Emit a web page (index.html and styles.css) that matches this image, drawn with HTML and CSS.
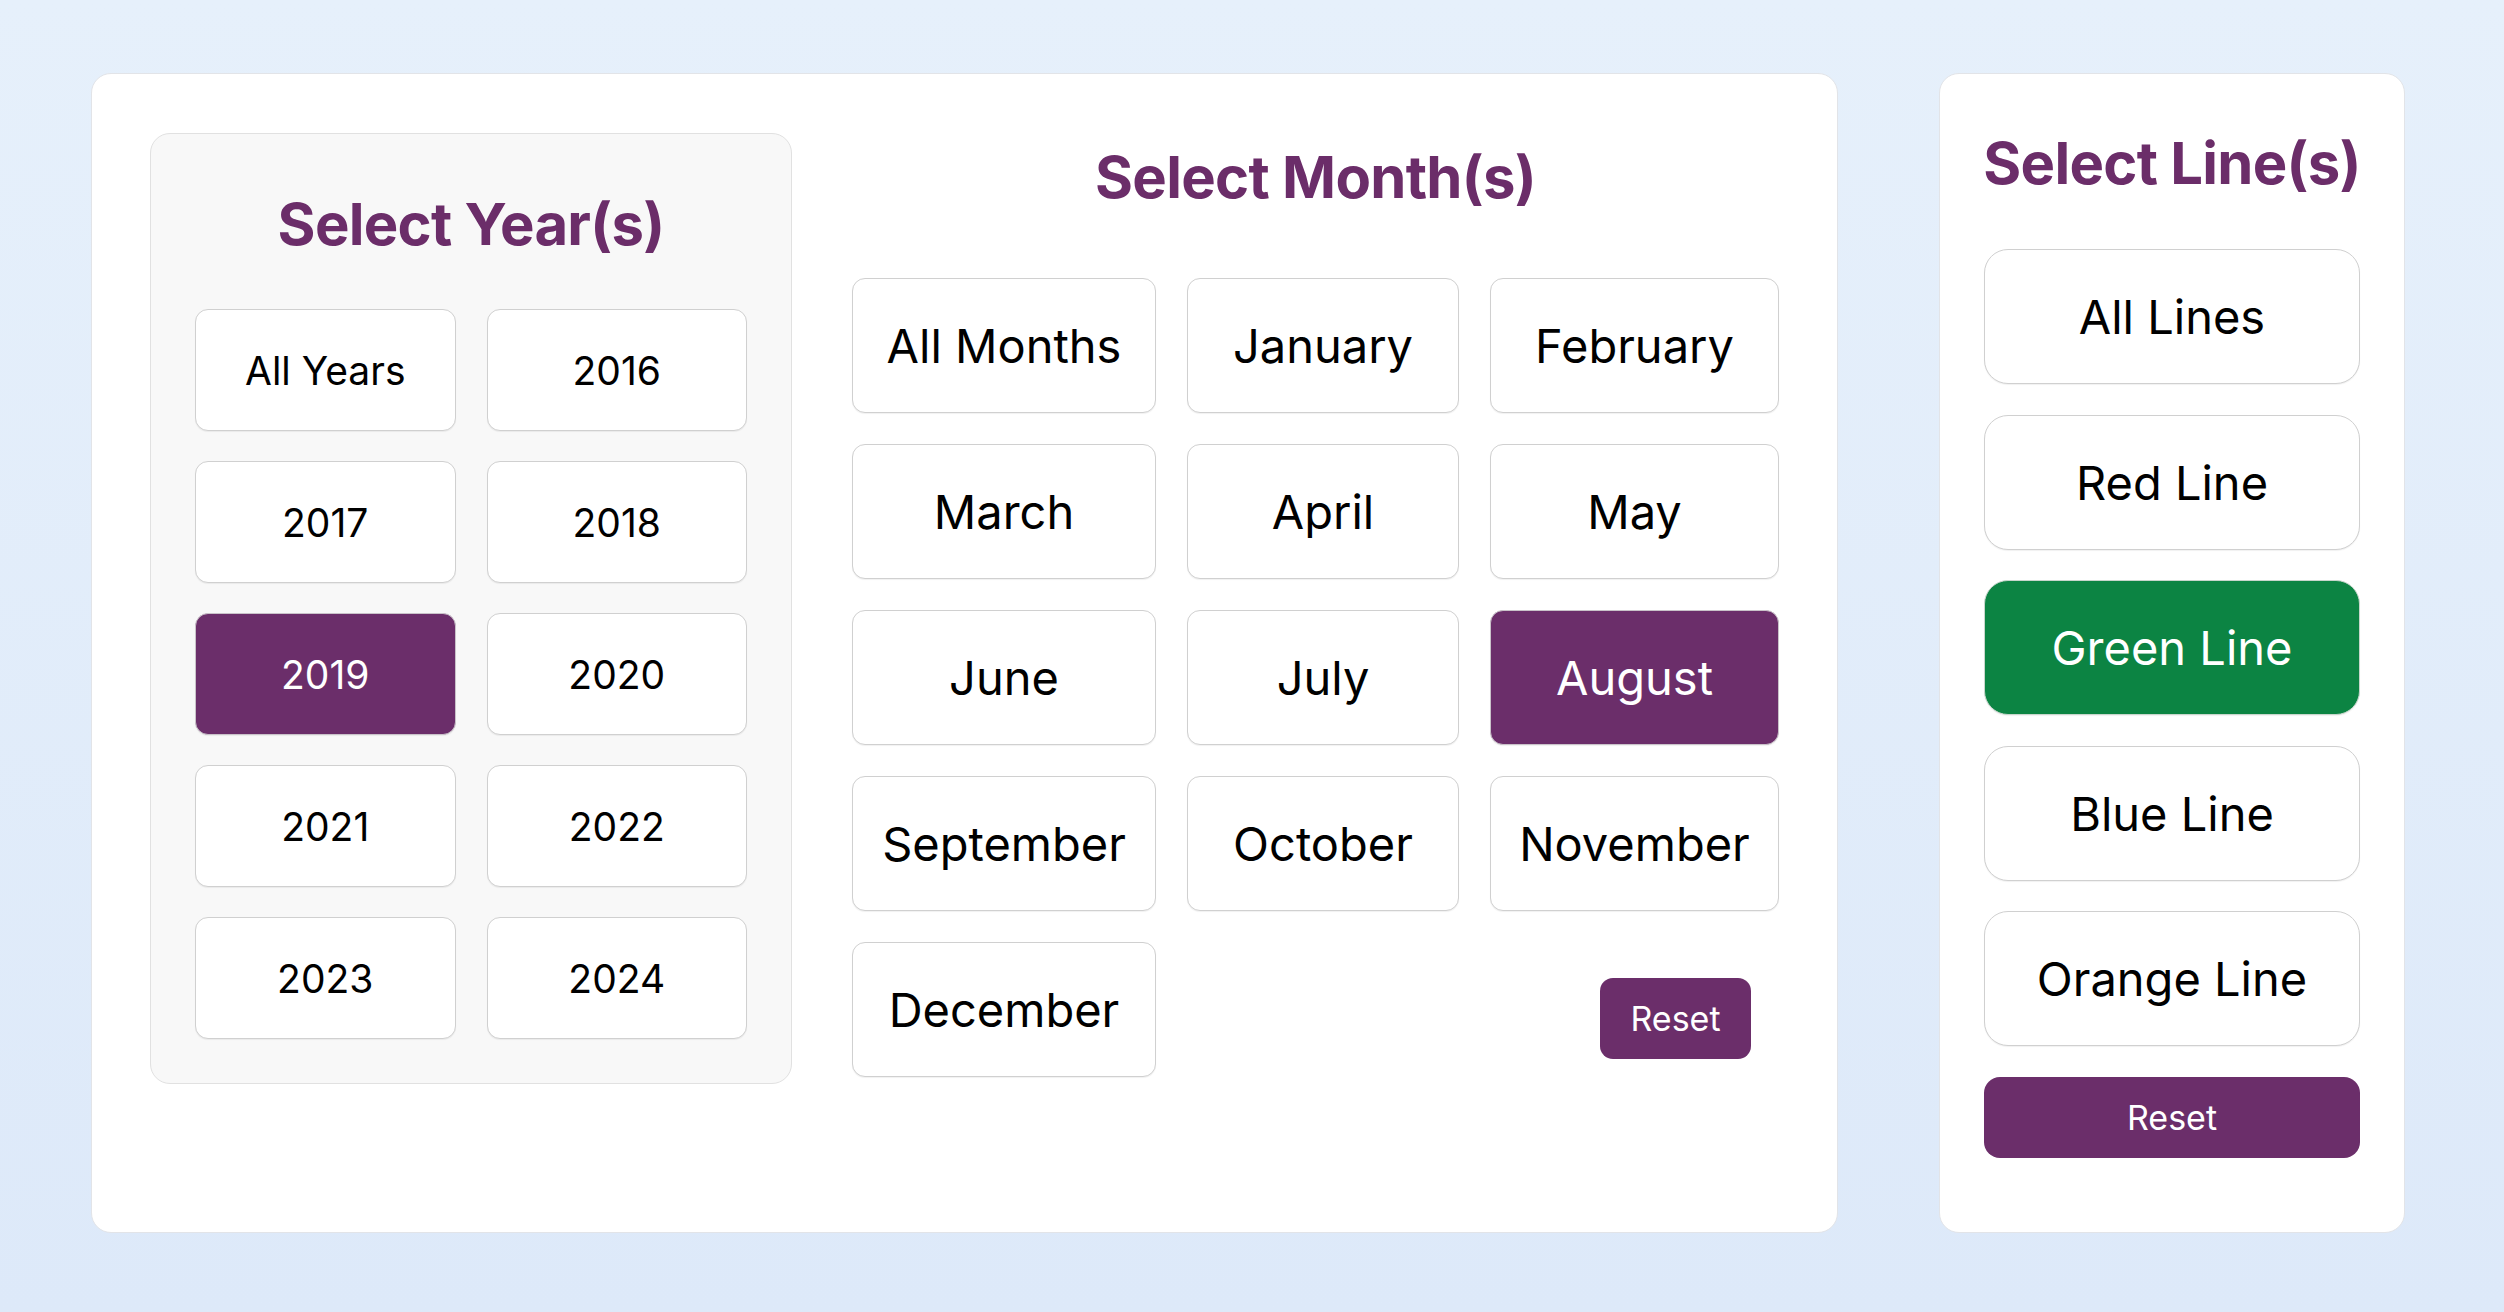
FILE: index.html
```html
<!DOCTYPE html>
<html lang="en">
<head>
<meta charset="utf-8">
<title>Filters</title>
<link rel="stylesheet" href="styles.css">
</head>
<body>
<div class="page">
  <section class="card main-card">
    <div class="year-panel">
      <h2 class="title year-title">Select Year(s)</h2>
      <div class="year-grid">
        <button class="btn year-btn">All Years</button>
        <button class="btn year-btn">2016</button>
        <button class="btn year-btn">2017</button>
        <button class="btn year-btn">2018</button>
        <button class="btn year-btn selected">2019</button>
        <button class="btn year-btn">2020</button>
        <button class="btn year-btn">2021</button>
        <button class="btn year-btn">2022</button>
        <button class="btn year-btn">2023</button>
        <button class="btn year-btn">2024</button>
      </div>
    </div>
    <div class="month-panel">
      <h2 class="title month-title">Select Month(s)</h2>
      <div class="month-grid">
        <button class="btn month-btn">All Months</button>
        <button class="btn month-btn">January</button>
        <button class="btn month-btn">February</button>
        <button class="btn month-btn">March</button>
        <button class="btn month-btn">April</button>
        <button class="btn month-btn">May</button>
        <button class="btn month-btn">June</button>
        <button class="btn month-btn">July</button>
        <button class="btn month-btn selected">August</button>
        <button class="btn month-btn">September</button>
        <button class="btn month-btn">October</button>
        <button class="btn month-btn">November</button>
        <button class="btn month-btn">December</button>
        <button class="reset month-reset">Reset</button>
      </div>
    </div>
  </section>
  <section class="card line-card">
    <h2 class="title line-title">Select Line(s)</h2>
    <div class="line-list">
      <button class="btn line-btn">All Lines</button>
      <button class="btn line-btn">Red Line</button>
      <button class="btn line-btn green">Green Line</button>
      <button class="btn line-btn">Blue Line</button>
      <button class="btn line-btn">Orange Line</button>
      <button class="reset line-reset">Reset</button>
    </div>
  </section>
</div>
</body>
</html>
```

FILE: styles.css
```css
* {
  box-sizing: border-box;
}

html, body {
  margin: 0;
  padding: 0;
}

body {
  width: 2504px;
  height: 1312px;
  overflow: hidden;
  background: linear-gradient(180deg, #e6f0fb 0%, #dde9f9 100%);
  font-family: Inter, "Noto Sans", "Liberation Sans", sans-serif;
  color: #000;
}

.page {
  display: flex;
  align-items: stretch;
  gap: 101px;
  padding: 73px 99px 0 91px;
}

.card {
  background: #fff;
  border: 1px solid #e2e4e8;
  border-radius: 20px;
}

.main-card {
  width: 1747px;
  display: flex;
  align-items: flex-start;
  gap: 60px;
  padding: 59px 58px;
}

.title {
  margin: 0;
  font-size: 58px;
  line-height: 70px;
  font-weight: 700;
  color: #6b2d69;
  text-align: center;
  letter-spacing: -0.7px;
  white-space: nowrap;
}

.year-panel {
  width: 642px;
  flex: none;
  background: #f8f8f8;
  border: 1px solid #e1e1e1;
  border-radius: 20px;
  padding: 0 44px 44px 44px;
}

.year-title {
  margin: 55px 0 50px;
}

.year-grid {
  display: grid;
  grid-template-columns: 1fr 1fr;
  column-gap: 31px;
  row-gap: 30px;
}

.btn {
  font-family: inherit;
  background: #fff;
  color: #000;
  border: 1.5px solid #d0d0d0;
  border-radius: 13px;
  box-shadow: 0 1px 1px rgba(0, 0, 0, 0.06);
  padding: 0;
  font-weight: 400;
  cursor: pointer;
  white-space: nowrap;
}

.btn.selected {
  background: #6b2e6a;
  border-color: #c9c2c9;
  color: #fff;
}

.year-btn {
  height: 122px;
  font-size: 39px;
}

.month-panel {
  flex: 1;
  display: flex;
  flex-direction: column;
  align-items: center;
}

.month-title {
  margin: 9px 0 66px;
}

.month-grid {
  display: grid;
  grid-template-columns: 304px 272px 289px;
  column-gap: 31px;
  row-gap: 31px;
}

.month-btn {
  height: 135px;
  font-size: 47px;
}

.reset {
  font-family: inherit;
  background: #6b2e6a;
  color: #fff;
  border: none;
  font-size: 34px;
  font-weight: 400;
  height: 81px;
  cursor: pointer;
}

.month-reset {
  grid-column: 3;
  justify-self: end;
  align-self: start;
  margin: 36px 28px 0 0;
  width: 151px;
  border-radius: 13px;
}

.line-card {
  width: 466px;
  flex: none;
  padding: 0 44px 74px;
}

.line-title {
  margin: 54px -20px 51px;
}

.line-list {
  display: flex;
  flex-direction: column;
  gap: 30.5px;
}

.line-btn {
  height: 135px;
  font-size: 47px;
  border-radius: 24px;
}

.line-btn.green {
  background: #0c8443;
  border-color: #c8d6cc;
  color: #fff;
}

.line-reset {
  width: 100%;
  border-radius: 16px;
}
```
